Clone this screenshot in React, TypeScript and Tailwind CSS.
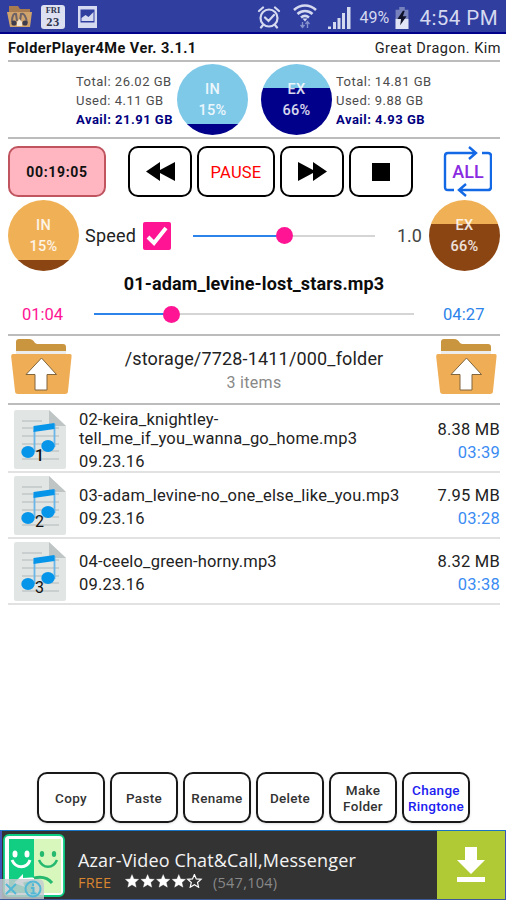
import type { ReactNode } from "react";

const tracks = [
  { no: 1, name: ["02-keira_knightley-", "tell_me_if_you_wanna_go_home.mp3"], date: "09.23.16", size: "8.38 MB", length: "03:39" },
  { no: 2, name: ["03-adam_levine-no_one_else_like_you.mp3"], date: "09.23.16", size: "7.95 MB", length: "03:28" },
  { no: 3, name: ["04-ceelo_green-horny.mp3"], date: "09.23.16", size: "8.32 MB", length: "03:38" },
];

const actions = ["Copy", "Paste", "Rename", "Delete", "Make Folder", "Change Ringtone"];

function StatusBar() {
  return (
    <header className="flex h-[34px] items-center border-b-2 border-[#00008b] bg-[#303f9f] text-[#d5d9f0]">
      {/* LEFT — NOTIFICATIONS */}
      <svg className="mt-px ml-[7px] h-6 w-[26px]" viewBox="0 0 26 24">
        <path d="M2 3V1h9l2 3h10v5H2z" fill="#a87c50" />
        <path d="M0 7h25l-2 15H3z" fill="#d1a36c" />
        <path d="M5 17c0-7 2-9 4-8l1 7M13 16l1-7c3-1 5 2 6 9" fill="none" stroke="#6d6266" strokeWidth="2" />
        <circle cx="7" cy="18" r="2.6" fill="#3e3c4d" />
        <circle cx="18" cy="18" r="2.6" fill="#3e3c4d" />
        <path d="m10 17 2.500-3 2.500 3v4h-5z" fill="#f2e5d4" />
      </svg>
      <div className="mt-[2px] ml-2 flex h-6 w-6 flex-col items-center justify-between rounded-[3px] bg-[#dce0f1] font-['Liberation_Serif',serif] text-[#30364e]">
        <span className="text-[8.500px] leading-[10px] font-bold">FRI</span>
        <span className="text-[12.500px] leading-[14px] font-bold tracking-[0.6px]">23</span>
      </div>
      <svg className="mt-[2px] ml-3 h-[22px] w-[21px]" viewBox="0 0 21 22">
        <path fillRule="evenodd" d="M1 0h19v22H1zM3.500 3.500v13h14v-13z" fill="#d5daf1" />
        <path d="M4.500 15v-3l4-3 3 2 5-5v9z" fill="#d5daf1" />
      </svg>

      {/* RIGHT — SYSTEM */}
      <svg className="mt-px ml-auto h-6 w-6" viewBox="0 0 24 24" fill="none" stroke="currentColor" strokeWidth="2.200" strokeLinecap="round">
        <circle cx="12" cy="13" r="8.500" />
        <path d="m8 12.500 3.500 3.500 5.500-6M2 6l4-3.500M22 6l-4-3.500M6 20l-2 2.500M18 20l2 2.500" />
      </svg>
      <svg className="ml-3 h-[26px] w-6" viewBox="0 0 24 26" fill="none" stroke="currentColor" strokeWidth="2.600">
        <path d="M1 7c6.500-6 15.500-6 22 0M4.500 11c4.500-4 10.500-4 15 0M8 14.500c2.500-2 5.500-2 8 0" />
        <path d="m9.500 15.500 2.500 3 2.500-3z" fill="currentColor" stroke="none" />
        <path d="M9.500 24v-5m-2 3 2 2.500 2-2.500M14.500 19v6m-2-4 2-2.500 2 2.500" stroke="#8892cc" strokeWidth="1.300" />
      </svg>
      <svg className="mt-[3px] ml-[11px] h-[22px] w-[23px]" viewBox="0 0 23 22" fill="currentColor">
        <path d="M0 19.500h3V22H0zM5 15h3v7H5zM9.500 11h3v11h-3zM14 6h3v16h-3zM19 0h3.500v22H19z" />
      </svg>
      <span className="mt-[3px] ml-2 w-[32px] text-[16px] tracking-[0.1px] whitespace-nowrap">49%</span>
      <svg className="mt-[3px] ml-[3px] h-[22px] w-4" viewBox="0 0 16 24">
        <path d="M5 0h6v3h4v21H1V3h4z" fill="#7782bd" />
        <path d="M1 13h14v11H1z" fill="#e2e5f6" />
        <path d="m9 4-6 9h4l-1 7 7-10H9l2-6z" fill="#11132a" />
      </svg>
      <span className="mt-[4px] mr-[8px] ml-[9px] text-[20.500px] leading-6 tracking-[0.45px] whitespace-nowrap">4:54 PM</span>
    </header>
  );
}

function Gauge({ label, percent, top, bottom, split }: { label: string; percent: string; top: string; bottom: string; split: number }) {
  return (
    <div
      className="flex size-[71px] shrink-0 flex-col items-center justify-center rounded-full text-[14.500px] leading-[21px] font-medium tracking-[0.3px] text-white/85"
      style={{ background: `linear-gradient(${top} ${split}%, ${bottom} ${split}%)` }}
    >
      <span>{label}</span>
      <span>{percent}</span>
    </div>
  );
}

function DiskInfo({ total, used, avail, className }: { total: string; used: string; avail: string; className: string }) {
  return (
    <div className={`text-[13px] leading-[19px] tracking-[0.49px] whitespace-nowrap text-[#4c4c4c] ${className}`}>
      <div>Total: {total} GB</div>
      <div>Used: {used} GB</div>
      <div className="font-bold text-[#00007f]">Avail: {avail} GB</div>
    </div>
  );
}

function Key({ className, children }: { className: string; children: ReactNode }) {
  return (
    <button className={`flex h-[51px] shrink-0 items-center justify-center rounded-[10px] border-2 ${className}`}>
      {children}
    </button>
  );
}

function Slider({ done, className }: { done: string; className: string }) {
  return (
    <div className={`flex h-4 items-center ${className}`}>
      <div className={`h-[2px] bg-[#2c83ea] ${done}`} />
      <div className="relative z-10 -mx-2 size-[17px] shrink-0 rounded-full bg-[#ff1493]" />
      <div className="h-[2px] flex-1 bg-[#d5d5d5]" />
    </div>
  );
}

function FolderUp() {
  return (
    <svg className="h-[56px] w-[61px] shrink-0" viewBox="0 0 61 56">
      <path d="M5 12V3q0-3 3-3h10c3 0 4 1 6 4l2 1h26q3 0 3 3v4z" fill="#c9953f" />
      <path d="M5 12h50v4H5z" fill="#ececec" />
      <path d="M2 15h57q2 0 1.500 3L57 52q0 3-3 3H7q-3 0-3-3L.2 18Q0 15 2 15z" fill="#efad55" />
      <path d="m30.500 19 15 16.500H36V51H24V35.500h-9z" fill="#fff" stroke="#80653d" />
    </svg>
  );
}

function MusicFile({ no }: { no: number }) {
  return (
    <svg className="h-[59px] w-[52px] shrink-0" viewBox="0 0 52 59">
      <path d="M2 0h33l17 16v41q0 2-2 2H2q-2 0-2-2V2q0-2 2-2z" fill="#e1e5e4" />
      <path d="M35 0v16h17z" fill="#bfc4c4" />
      <path d="M8 11h20M8 18h37M8 26h37M8 34h37M8 41h37M8 49h37" stroke="#c9cece" strokeWidth="2" />
      <path d="M20.500 42V19M40.500 37V14" stroke="#69b6e8" strokeWidth="1.800" />
      <path d="m19.500 16 21-3v6l-21 3z" fill="#0795e9" />
      <ellipse cx="14" cy="42" rx="6.700" ry="6" fill="#0795e9" />
      <ellipse cx="34" cy="36" rx="6.700" ry="6" fill="#0795e9" />
      <text x="25.500" y="51" textAnchor="middle" fontSize="16" fontWeight={no === 1 ? 500 : 400} fill="#111">{no}</text>
    </svg>
  );
}

function AdBanner() {
  return (
    <footer className="flex h-[70px] items-center border-t border-b border-t-[#1976c5] border-b-[#3c5a9a] bg-[#333] font-['Open_Sans',sans-serif]">
      <div className="relative h-full w-[66px] shrink-0 border-l-2 border-[#3f51b5]">
        <svg className="mt-[3px] h-[64px] w-[64px]" viewBox="0 0 64 64">
          <rect x="2" y="1" width="60" height="61" rx="5" fill="#fff" stroke="#0dce83" strokeWidth="1.800" />
          <path d="M7 5h25v54H7z" fill="#12ce83" />
          <path d="M32 5h27v54H32z" fill="#d8f7bd" />
          <path d="M10 26c4 9 15 9 18 0" fill="none" stroke="#fff" strokeWidth="3" />
          <path d="M37 26c4 9 14 9 18 0" fill="none" stroke="#25b96f" strokeWidth="2.500" />
          <ellipse cx="13" cy="20" rx="2.500" ry="3.500" fill="#fff" />
          <ellipse cx="25" cy="20" rx="2.500" ry="3.500" fill="#fff" />
          <ellipse cx="40" cy="20" rx="2.200" ry="3" fill="#25b96f" />
          <ellipse cx="52" cy="20" rx="2.200" ry="3" fill="#25b96f" />
          <path d="m12 49 9-9v4c4 0 8-1 11 0v5c-4-2-8-2-11 0l2 4z" fill="#fff" />
          <path d="M32 44c8-2 14 0 18 5" fill="none" stroke="#25b96f" strokeWidth="3" />
        </svg>
        {/* AdChoices */}
        <svg className="absolute bottom-0 -left-[2px] h-5 w-[44px]" viewBox="0 0 44 20">
          <path d="M0 0h38q6 0 6 6v14H0z" fill="#c5cbd0" fillOpacity=".82" />
          <path d="m6 5 10 10m0-10L6 15" stroke="#52b8d6" strokeWidth="2" />
          <circle cx="33" cy="10" r="7.500" fill="none" stroke="#52b8d6" strokeWidth="2" />
          <path d="M33 4.500v2.500M31 9h2.500v5.500M30.500 14.500h6" fill="none" stroke="#52b8d6" strokeWidth="2" />
        </svg>
      </div>
      <div className="mt-[13px] ml-3 whitespace-nowrap">
        <div className="text-[18px] leading-[23px] tracking-[0.14px] text-[#f4f4f4]">Azar-Video Chat&amp;Call,Messenger</div>
        <div className="flex h-[22px] items-center">
          <span className="w-[47px] text-[14.500px] tracking-[0.2px] text-[#d7852f]">FREE</span>
          <svg className="-mt-1 h-[14px] w-[78px]" viewBox="0 0 78 14">
            {[0, 1, 2, 3, 4].map((i) => (
              <path
                key={i}
                transform={`translate(${i * 15.6})`}
                d="m7 0.500 1.900 4.400 4.800.4-3.600 3.200 1.100 4.700L7 10.700l-4.200 2.500 1.100-4.700L.3 5.300l4.800-.4z"
                fill={i < 4 ? "#fff" : "none"}
                stroke="#fff"
                strokeWidth={i < 4 ? 0.3 : 1.2}
              />
            ))}
          </svg>
          <span className="ml-[10px] text-[14.500px] tracking-[0.25px] text-[#888]">(547,104)</span>
        </div>
      </div>
      <button className="ml-auto flex h-full w-[69px] items-center justify-center border-r border-[#3f51b5] bg-[#afca35]">
        <svg className="h-[36px] w-[28px]" viewBox="0 0 28 36" fill="#fff">
          <path d="M8 0h12v13h8L14 27 0 13h8zM0 30h28v5H0z" />
        </svg>
      </button>
    </footer>
  );
}

export default function App() {
  return (
    <div className="flex h-[900px] w-[506px] flex-col overflow-hidden bg-white font-['Roboto',sans-serif] text-[#222]">
      <StatusBar />

      <main className="flex flex-1 flex-col pr-[6px] pl-2">
        {/* TITLE */}
        <div className="flex h-[28px] items-center justify-between border-b-2 border-[#bcbcbc] pt-[3px] text-[14.500px]">
          <h1 className="font-bold tracking-[0.44px] whitespace-nowrap text-[#111]">FolderPlayer4Me Ver. 3.1.1</h1>
          <span className="-mr-px tracking-[0.5px] whitespace-nowrap">Great Dragon. Kim</span>
        </div>

        {/* STORAGE */}
        <div className="flex h-[77px] items-center border-b-2 border-[#bcbcbc]">
          <DiskInfo className="ml-[68px] w-[101px] shrink-0 pt-[2px]" total="26.02" used="4.11" avail="21.91" />
          <Gauge label="IN" percent="15%" top="#7ec8e8" bottom="#00008b" split={85} />
          <div className="w-[13px]" />
          <Gauge label="EX" percent="66%" top="#7ec8e8" bottom="#00008b" split={34} />
          <DiskInfo className="ml-1 pt-[2px]" total="14.81" used="9.88" avail="4.93" />
        </div>

        {/* PLAYBACK KEYS */}
        <div className="flex h-[61px] shrink-0 pt-[7px]">
          <Key className="w-[98px] border-[#c05560] bg-[#ffb6c1] pt-[2px] text-[14px] font-bold tracking-[0.65px] text-[#111]">00:19:05</Key>
          <div className="ml-[22px] flex gap-[5px]">
            <Key className="w-16 border-black">
              <svg className="h-[19px] w-[29px]" viewBox="0 0 29 19"><path d="M14 0v8l15-8v19l-15-8v8L0 9.500z" /></svg>
            </Key>
            <Key className="w-[78px] border-black pt-[3px] text-[16.500px] tracking-[0.2px] text-[#f00]">PAUSE</Key>
            <Key className="w-16 border-black">
              <svg className="h-[19px] w-[29px]" viewBox="0 0 29 19"><path d="M15 0v8L0 0v19l15-8v8l14-9.500z" /></svg>
            </Key>
            <Key className="w-16 border-black">
              <div className="size-[18px] bg-black" />
            </Key>
          </div>
          <svg className="ml-[30px] h-[51px] w-[49px]" viewBox="0 0 49 51" fill="none" stroke="#1268e5" strokeWidth="2.400">
            <path d="M11 44H5q-3 0-3-3V10q0-3 3-3h27m-6-6 7 6-7 6M39 7h6q3 0 3 3v31q0 3-3 3H17m6-6-7 6 7 6" />
            <text x="25" y="32" textAnchor="middle" fontSize="18" fontWeight="500" fill="#8a2be2" stroke="none">ALL</text>
          </svg>
        </div>

        {/* SPEED */}
        <div className="flex h-[71px] shrink-0 items-center">
          <Gauge label="IN" percent="15%" top="#efb056" bottom="#8b4513" split={85} />
          <span className="ml-[6px] w-[58px] text-[18px] tracking-[0.2px]">Speed</span>
          <div className="flex size-7 items-center justify-center rounded-[2px] bg-[#ff1493]">
            <svg className="size-6" viewBox="0 0 24 24" fill="none" stroke="#fff" strokeWidth="4"><path d="m3 13 6 6L21 4" /></svg>
          </div>
          <Slider className="ml-[22px] w-[182px]" done="w-[91px]" />
          <span className="ml-[22px] w-[32px] text-[18px] text-[#444]">1.0</span>
          <Gauge label="EX" percent="66%" top="#efb056" bottom="#8b4513" split={34} />
        </div>

        {/* NOW PLAYING */}
        <div className="flex h-[65px] shrink-0 flex-col border-b-2 border-[#bcbcbc]">
          <div className="h-[35px] pt-[2px] text-center text-[18px] leading-[22px] font-bold tracking-[0.15px] text-[#0c0c0c]">01-adam_levine-lost_stars.mp3</div>
          <div className="flex h-4 items-center text-[16.500px]">
            <span className="ml-[14px] w-[72px] pt-[2px] text-[#ff1493]">01:04</span>
            <Slider className="w-[320px]" done="w-[77px]" />
            <span className="ml-[29px] pt-[2px] tracking-[0.1px] text-[#2c83ea]">04:27</span>
          </div>
        </div>

        {/* FOLDER */}
        <div className="flex h-[69px] shrink-0 justify-between border-b-2 border-[#bcbcbc] px-[3px] pt-[3px]">
          <FolderUp />
          <div className="pt-[8px] text-center">
            <div className="text-[18px] leading-6 tracking-[0.17px] whitespace-nowrap">/storage/7728-1411/000_folder</div>
            <div className="text-[16px] leading-6 tracking-[0.3px] text-[#888]">3 items</div>
          </div>
          <FolderUp />
        </div>

        {/* TRACKS */}
        <div className="pt-[2px]">
          {tracks.map((track) => (
            <div key={track.no} className="flex h-[66px] items-center border-b-2 border-[#e2e2e2] pl-[6px]">
              <MusicFile no={track.no} />
              <div className="ml-[13px] pt-[3px] text-[16.500px] leading-[19px] tracking-[0.18px] whitespace-nowrap">
                {track.name.map((line) => (
                  <div key={line}>{line}</div>
                ))}
                <div className="mt-[4px]">{track.date}</div>
              </div>
              <div className="ml-auto pt-[3px] text-right text-[16.500px] leading-[23px] tracking-[0.22px] whitespace-nowrap">
                <div>{track.size}</div>
                <div className="text-[#3b8cf2]">{track.length}</div>
              </div>
            </div>
          ))}
        </div>

        {/* FILE ACTIONS */}
        <div className="mt-auto mb-[7px] ml-[29px] flex gap-[5px] text-[13.500px] leading-[16px] font-medium tracking-[0.3px]">
          {actions.map((action) => (
            <Key key={action} className={`w-[68px] border-[#181818] pt-px shadow-sm ${action === "Change Ringtone" ? "text-[#2020f0]" : "text-[#333]"}`}>
              <span className={action.includes(" ") ? "w-min" : ""}>{action}</span>
            </Key>
          ))}
        </div>
      </main>

      <AdBanner />
    </div>
  );
}
